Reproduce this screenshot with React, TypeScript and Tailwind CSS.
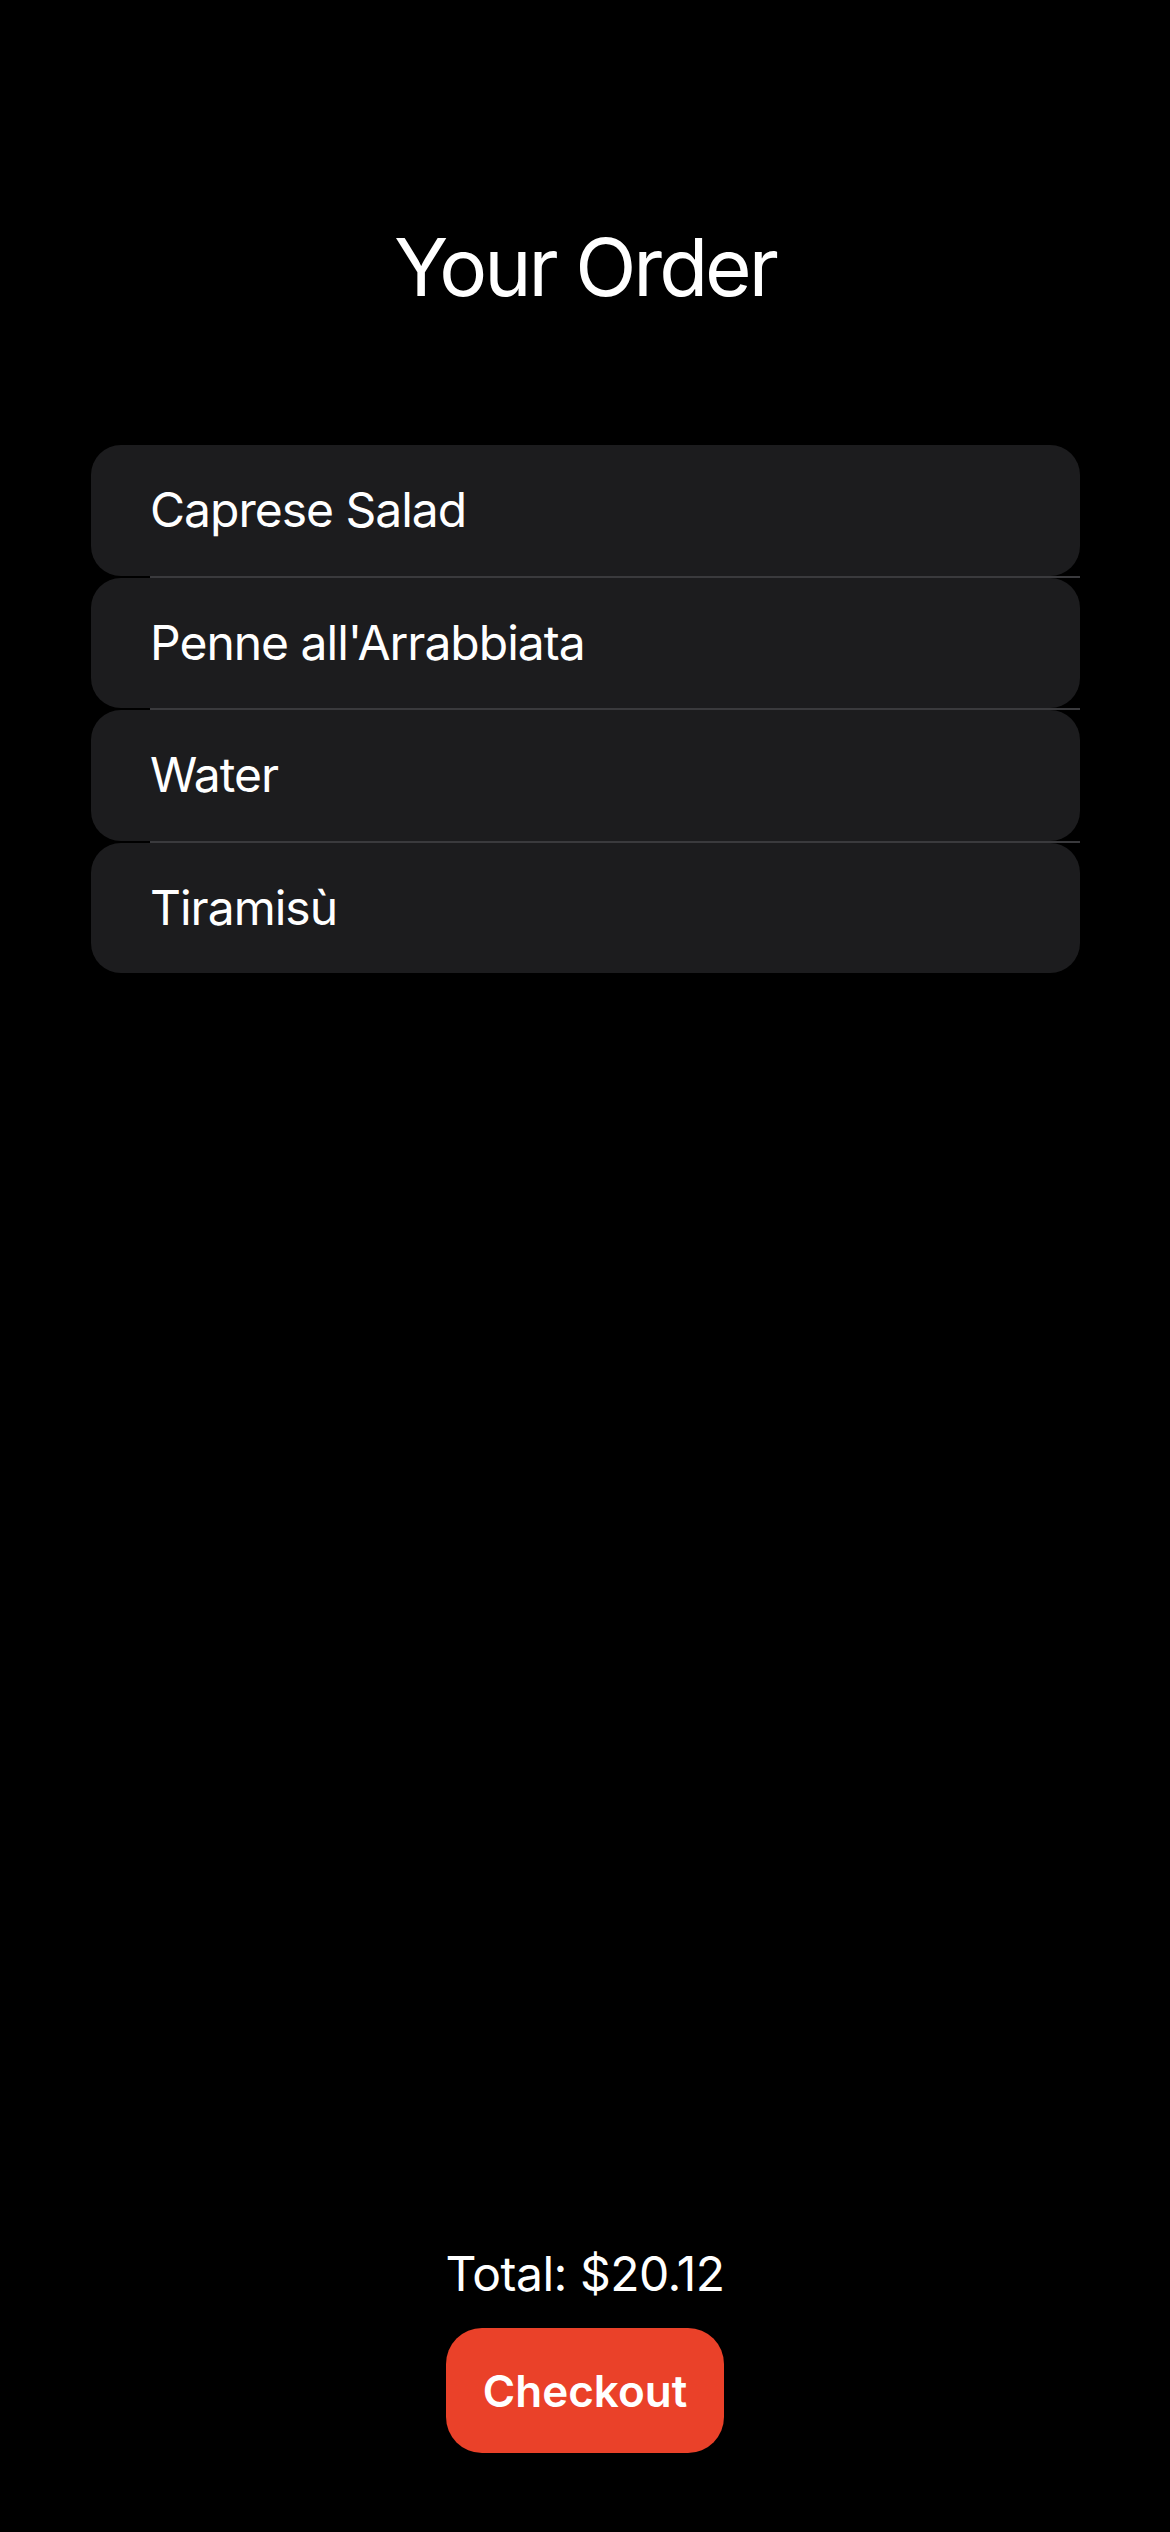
const items = ['Caprese Salad', "Penne all'Arrabbiata", 'Water', 'Tiramisù'];

export default function App() {
  return (
    <div
      className="min-h-screen bg-black text-white flex flex-col"
      style={{ fontFamily: 'Inter, "Noto Sans", sans-serif' }}
    >
      <h1 className="pt-[227px] text-center text-[80px] leading-[80px] font-normal tracking-[-3px]">
        Your Order
      </h1>

      <div className="mt-[138px] ml-[91px] mr-[90px]">
        {items.map((item, i) => (
          <div key={item}>
            <div className="h-[130.5px] rounded-[30px] bg-[#1c1c1e] flex items-center pl-[59px]">
              <span className="text-[48px] leading-[48px] tracking-[-1px]">{item}</span>
            </div>
            {i < items.length - 1 && <div className="h-[2px] ml-[59px] bg-[#3a3a3d]" />}
          </div>
        ))}
      </div>

      <div className="mt-auto flex flex-col items-center pb-[79px]">
        <p className="text-[48px] leading-[48px] tracking-[-0.5px]">Total: $20.12</p>
        <button className="mt-[30px] w-[278px] h-[125px] rounded-[36px] bg-[#ea4129] text-[44px] font-semibold text-white">
          Checkout
        </button>
      </div>
    </div>
  );
}
